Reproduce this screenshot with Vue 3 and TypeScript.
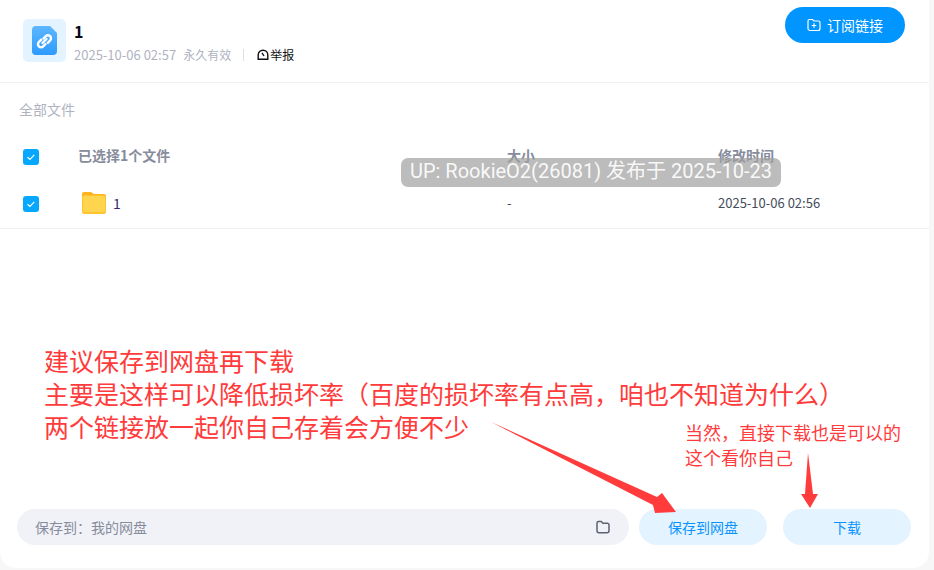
<script setup lang="ts">
const files = [{ name: '1', size: '-', time: '2025-10-06 02:56' }]
</script>

<template>
  <div class="page">
    <main class="card">
      <header class="head">
        <div class="file-icon">
          <svg viewBox="0 0 25 29" width="25" height="29">
            <defs>
              <linearGradient id="doc" x1="0" y1="0" x2="0" y2="1">
                <stop offset="0" stop-color="#5db6ff" />
                <stop offset="1" stop-color="#2d9bff" />
              </linearGradient>
            </defs>
            <path d="M4 0H18L25 7V25a4 4 0 0 1-4 4H4a4 4 0 0 1-4-4V4a4 4 0 0 1 4-4Z" fill="url(#doc)" />
            <g fill="none" stroke="#fff" stroke-width="2.4" stroke-linecap="round">
              <path d="M11.5 12.5l2.3-2.3a3 3 0 0 1 4.3 4.3l-2.3 2.3" />
              <path d="M13.5 18l-2.3 2.3a3 3 0 0 1-4.3-4.3l2.3-2.3" />
              <path d="M10.5 17l4-4" />
            </g>
          </svg>
        </div>
        <div class="head-info">
          <h1 class="title">1</h1>
          <div class="meta">
            <span class="date">2025-10-06 02:57</span>
            <span class="expire">永久有效</span>
            <i class="sep"></i>
            <span class="report">
              <svg viewBox="0 0 12 12" width="12" height="12">
                <path d="M1.2 10.2V6a4.8 4.8 0 0 1 9.6 0v4.2Z" fill="none" stroke="#111" stroke-width="1.4" />
                <path d="M5 3.8L7 7" stroke="#111" stroke-width="1.4" />
              </svg>举报
            </span>
          </div>
        </div>
        <button class="subscribe">
          <svg viewBox="0 0 14 14" width="14" height="14">
            <path d="M1 3a1.5 1.5 0 0 1 1.5-1.5h3L7 3h4.5A1.5 1.5 0 0 1 13 4.5v6a2 2 0 0 1-2 2H3a2 2 0 0 1-2-2Z" fill="none" stroke="#fff" stroke-width="1.2" />
            <path d="M7 5.2v4.6M4.7 7.5h4.6" stroke="#fff" stroke-width="1.2" />
          </svg>
          订阅链接
        </button>
      </header>

      <section class="list">
        <div class="crumb">全部文件</div>
        <div class="row row-head">
          <span class="check"><svg viewBox="0 0 16 16"><path d="M4.5 8.2l2.4 2.3 4.4-4.6" /></svg></span>
          <span class="c-name">已选择1个文件</span>
          <span class="c-size">大小</span>
          <span class="c-time">修改时间</span>
        </div>
        <div v-for="f in files" :key="f.name" class="row row-file">
          <span class="check"><svg viewBox="0 0 16 16"><path d="M4.5 8.2l2.4 2.3 4.4-4.6" /></svg></span>
          <span class="c-name name-cell">
            <svg class="folder" viewBox="0 0 24 22" width="24" height="22">
              <path d="M2 0h7l3 2h10a2 2 0 0 1 2 2v4H0V2a2 2 0 0 1 2-2Z" fill="#ffb21f" />
              <rect x="0" y="3" width="24" height="19" rx="2.5" fill="#ffc52e" />
              <rect x="1" y="4" width="22" height="16" rx="2" fill="#ffd54f" />
            </svg>
            {{ f.name }}
          </span>
          <span class="c-size cell">{{ f.size }}</span>
          <span class="c-time cell">{{ f.time }}</span>
        </div>
      </section>

      <footer class="foot">
        <div class="save-path">
          <span>保存到：我的网盘</span>
          <svg viewBox="0 0 16 16" width="16" height="16">
            <path d="M2 4a1.5 1.5 0 0 1 1.5-1.5h2.7L8 4.2h4.6A1.5 1.5 0 0 1 14 5.7v6a2 2 0 0 1-2 2H4a2 2 0 0 1-2-2Z" fill="none" stroke="#5d6272" stroke-width="1.5" />
          </svg>
        </div>
        <button class="soft save">保存到网盘</button>
        <button class="soft download">下载</button>
      </footer>
    </main>

    <div class="watermark">UP: RookieO2(26081) 发布于 2025-10-23</div>

    <div class="note note-main">
      建议保存到网盘再下载<br />
      主要是这样可以降低损坏率（百度的损坏率有点高，咱也不知道为什么）<br />
      两个链接放一起你自己存着会方便不少
    </div>
    <div class="note note-side">
      当然，直接下载也是可以的<br />
      这个看你自己
    </div>
    <svg class="arrows" viewBox="0 0 934 570" width="934" height="570">
      <polygon points="491,422 657,497 662,493 676,512 655,513 653,505" fill="#ff3b3b" />
      <polygon points="808,453 813,494 818,494 810,508 801,494 805,494" fill="#ff3b3b" />
    </svg>
  </div>
</template>

<style scoped>
.page {
  position: relative;
  width: 934px;
  height: 570px;
  overflow: hidden;
  background: #f7f7f8;
  font-family: "Noto Sans CJK SC", "Noto Sans", sans-serif;
}
.card {
  width: 929px;
  height: 568px;
  display: flex;
  flex-direction: column;
  background: #fff;
  border-bottom-left-radius: 16px;
  border-bottom-right-radius: 16px;
}
.head {
  height: 83px;
  box-sizing: border-box;
  display: flex;
  align-items: flex-start;
  padding: 19px 24px 0 23px;
  border-bottom: 1px solid #f1f2f6;
}
.file-icon {
  width: 43px;
  height: 43px;
  display: flex;
  align-items: center;
  justify-content: center;
  background: #e3f3ff;
  border-radius: 5px;
}
.head-info {
  margin-left: 8px;
  flex: 1;
}
.title {
  margin: 2px 0 0;
  font-size: 16px;
  line-height: 20px;
  font-weight: 700;
  color: #03081a;
}
.meta {
  margin-top: 5px;
  display: flex;
  align-items: center;
  font-size: 12px;
  line-height: 18px;
  color: #afb3bf;
}
.date {
  font-size: 13px;
}
.expire {
  margin-left: 7px;
}
.sep {
  width: 1px;
  height: 12px;
  margin: 0 13px 0 12px;
  background: #dfe0e5;
}
.report {
  display: flex;
  align-items: center;
  gap: 1px;
  color: #111;
}
.subscribe {
  margin-top: -12px;
  width: 120px;
  height: 36px;
  display: flex;
  align-items: center;
  justify-content: center;
  gap: 6px;
  border: 0;
  padding: 0;
  border-radius: 18px;
  background: #0095ff;
  color: #fff;
  font: 14px "Noto Sans CJK SC", sans-serif;
}
.list {
  flex: 1;
}
.crumb {
  padding: 17px 0 1px 19px;
  font-size: 14px;
  line-height: 18px;
  color: #afb3bf;
}
.row {
  display: flex;
  align-items: center;
  padding-left: 23px;
}
.row-head {
  height: 46px;
  margin-top: 14px;
  font-size: 14px;
  font-weight: 700;
  color: #878c9c;
}
.row-head .check {
  margin-top: 2px;
}
.row-head .c-name,
.row-head .c-size,
.row-head .c-time,
.row-file .c-name,
.row-file .c-size,
.row-file .c-time {
  padding-bottom: 2px;
}
.row-file {
  height: 50px;
  box-sizing: border-box;
  border-bottom: 1px solid #eeeff4;
  font-size: 13px;
  color: #03081a;
}
.check {
  width: 16px;
  height: 16px;
  flex: none;
  border-radius: 3px;
  background: #06a7ff;
}
.check svg {
  display: block;
  fill: none;
  stroke: #fff;
  stroke-width: 1.2;
}
.c-name {
  width: 429px;
  margin-left: 39px;
}
.c-size {
  width: 211px;
}
.name-cell {
  display: flex;
  align-items: center;
  gap: 7px;
  font-size: 14px;
  color: #3b2a6b;
}
.folder {
  margin-left: 4px;
}
.cell {
  color: #454d5a;
}
.foot {
  height: 59px;
  flex: none;
  display: flex;
  gap: 10px;
  padding-left: 17px;
}
.save-path {
  width: 612px;
  height: 36px;
  flex: none;
  box-sizing: border-box;
  padding: 0 18px;
  display: flex;
  align-items: center;
  justify-content: space-between;
  border-radius: 18px;
  background: #f1f2f7;
  font-size: 14px;
  color: #878c9c;
}
.soft {
  width: 128px;
  height: 36px;
  flex: none;
  border: 0;
  padding: 0;
  border-radius: 18px;
  background: #e3f3ff;
  color: #0a93ff;
  font: 14px "Noto Sans CJK SC", sans-serif;
}
.download {
  margin-left: 6px;
}
.watermark {
  position: absolute;
  left: 401px;
  top: 158px;
  width: 380px;
  height: 29px;
  box-sizing: border-box;
  border-radius: 7px;
  background: rgba(160, 160, 160, 0.7);
  color: rgba(255, 255, 255, 0.93);
  font-family: Roboto, "Noto Sans CJK SC", sans-serif;
  font-size: 20px;
  line-height: 27px;
  text-align: center;
  white-space: nowrap;
}
.note {
  position: absolute;
  color: #ff3b3b;
  white-space: nowrap;
}
.note-main {
  left: 44px;
  top: 344px;
  font-size: 25px;
  line-height: 33px;
}
.note-side {
  left: 685px;
  top: 420px;
  font-size: 18px;
  line-height: 25px;
}
.arrows {
  position: absolute;
  left: 0;
  top: 0;
  pointer-events: none;
}
</style>
